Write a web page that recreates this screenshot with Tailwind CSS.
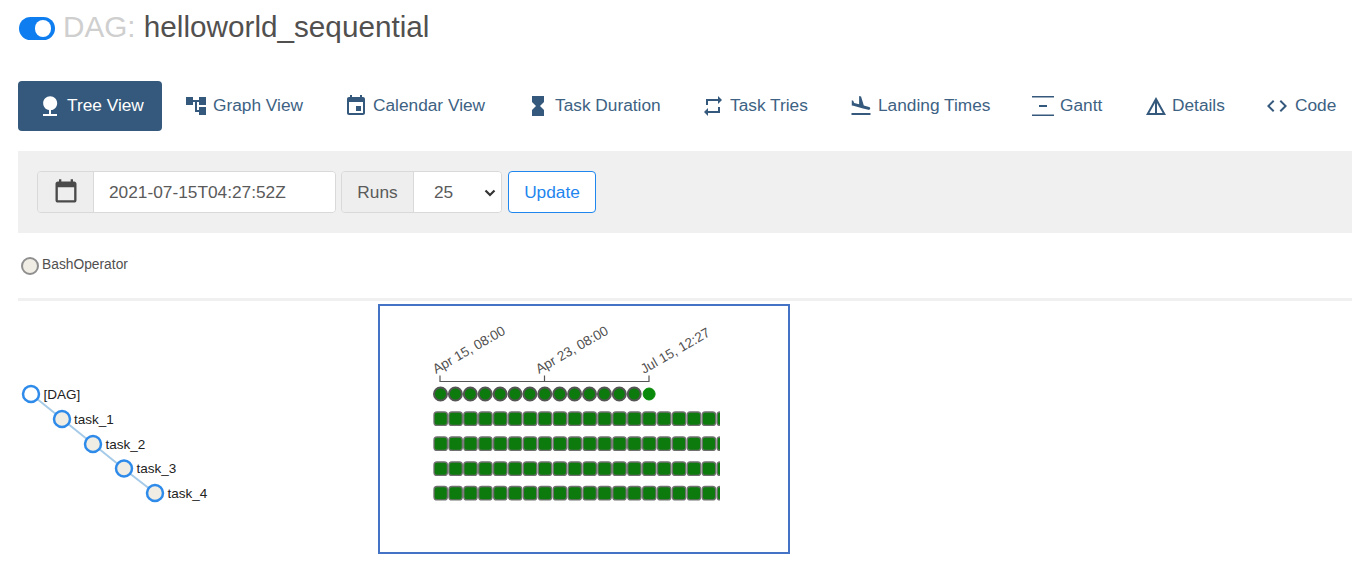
<!DOCTYPE html>
<html><head><meta charset="utf-8">
<script src="https://cdn.jsdelivr.net/npm/@tailwindcss/browser@4"></script>
</head>
<body class="bg-white overflow-hidden font-['Liberation_Sans',Arial,sans-serif] text-[#51504f]">
<div class="w-[1352px] h-[580px] pl-[18px] overflow-hidden">
  <header class="h-[81px] pt-[8px] flex items-start">
    <div class="mt-[9px] ml-[1px] w-[36px] h-[23px] rounded-full bg-[#0d7df0] flex items-center justify-end pr-[4px] shrink-0"><div class="w-[16px] h-[17px] rounded-full bg-white"></div></div>
    <h1 class="ml-[8px] text-[29.7px] leading-[38px] font-normal text-[#51504f] whitespace-nowrap"><span class="text-[#cfcfcf]">DAG:</span> helloworld_sequential</h1>
  </header>
  <nav class="flex h-[50px] items-stretch text-[#3d6283] text-[17.3px] whitespace-nowrap">
    <a class="flex items-center w-[144px] pl-[20px] gap-[5px] rounded-[4px] bg-[#34597c] text-white mr-[22px]">
      <svg class="w-[24px] h-[24px] fill-white" viewBox="0 0 24 24"><path d="M13 16.12c3.47-.4 6.17-3.36 6.17-6.95 0-3.87-3.13-7-7-7s-7 3.13-7 7c0 3.47 2.52 6.34 5.83 6.89V20H5v2h14v-2h-6v-3.88z"/></svg>Tree View</a>
    <a class="flex items-center w-[160px] gap-[5px]"><svg class="w-[24px] h-[24px] fill-[#34597c]" viewBox="0 0 24 24"><path d="M22 11V3h-7v3H9V3H2v8h7V8h2v10h4v3h7v-8h-7v3h-2V8h2v3z"/></svg>Graph View</a>
    <a class="flex items-center w-[182px] gap-[5px]"><svg class="w-[24px] h-[24px] fill-[#34597c]" viewBox="0 0 24 24"><path d="M17 12h-5v5h5v-5zM16 1v2H8V1H6v2H5c-1.11 0-1.99.9-1.99 2L3 19c0 1.1.89 2 2 2h14c1.1 0 2-.9 2-2V5c0-1.1-.9-2-2-2h-1V1h-2zm3 18H5V8h14v11z"/></svg>Calendar View</a>
    <a class="flex items-center w-[175px] gap-[5px]"><svg class="w-[24px] h-[24px] fill-[#34597c]" viewBox="0 0 24 24"><path d="M6 2v6h.01L6 8.01 10 12l-4 4 .01.01H6V22h12v-5.99h-.01L18 16l-4-4 4-3.99-.01-.01H18V2H6z"/></svg>Task Duration</a>
    <a class="flex items-center w-[148px] gap-[5px]"><svg class="w-[24px] h-[24px] fill-[#34597c]" viewBox="0 0 24 24"><path d="M7 7h10v3l4-4-4-4v3H5v6h2V7zm10 10H7v-3l-4 4 4 4v-3h12v-6h-2v4z"/></svg>Task Tries</a>
    <a class="flex items-center w-[182px] gap-[5px]"><svg class="w-[24px] h-[24px] fill-[#34597c]" viewBox="0 0 24 24"><path d="M2.5 19h19v2h-19zm7.18-5.73l4.35 1.16 5.31 1.42c.8.21 1.62-.26 1.84-1.06.21-.8-.26-1.62-1.06-1.84l-5.31-1.42-2.76-9.02L10.12 2v8.28L5.15 8.95l-.93-2.32-1.45-.39v5.17l1.6.43 5.31 1.43z"/></svg>Landing Times</a>
    <a class="flex items-center w-[113px] gap-[5px]"><svg class="w-[24px] h-[24px] fill-[#34597c]" viewBox="0 0 24 24"><path d="M1 22v-1.4h22V22H1zM1 3.4V2h22v1.4H1zM8 11h8v2H8z"/></svg>Gantt</a>
    <a class="flex items-center w-[121px] gap-[4px]"><svg class="w-[24px] h-[24px] fill-[#34597c]" viewBox="0 0 24 24"><path d="M12 3L2 21h20L12 3zm1 5.92L18.6 19H13V8.92zm-2 0V19H5.4L11 8.92z"/></svg>Details</a>
    <a class="flex items-center gap-[6px]"><svg class="w-[24px] h-[24px] fill-[#34597c]" viewBox="0 0 24 24"><path d="M9.4 16.6L4.8 12l4.6-4.6L8 6l-6 6 6 6 1.4-1.4zm5.2 0l4.6-4.6-4.6-4.6L16 6l6 6-6 6-1.4-1.4z"/></svg>Code</a>
  </nav>
  <form class="mt-[20px] h-[82px] bg-[#f0f0f0] pl-[19px] flex items-center text-[17.3px]">
    <div class="flex h-[42px] w-[299px] rounded-[4px] border border-[#d9d9d9] overflow-hidden">
      <span class="w-[56px] bg-[#eeeeee] border-r border-[#d9d9d9] flex items-center justify-center"><svg class="w-[28px] h-[28px] fill-[#4a4a4a]" viewBox="0 0 24 24"><path d="M19 3h-1V1h-2v2H8V1H6v2H5c-1.1 0-2 .9-2 2v14c0 1.1.9 2 2 2h14c1.1 0 2-.9 2-2V5c0-1.1-.9-2-2-2zm0 16H5V8h14v11z"/></svg></span>
      <span class="flex-1 bg-white flex items-center pl-[15px] pt-[2px] text-[#5a5a5a]">2021-07-15T04:27:52Z</span>
    </div>
    <div class="ml-[5px] flex h-[42px] w-[161px] rounded-[4px] border border-[#d9d9d9] overflow-hidden">
      <span class="w-[72px] bg-[#eeeeee] border-r border-[#d9d9d9] flex items-center justify-center pt-[2px] text-[#5a5a5a]">Runs</span>
      <span class="flex-1 bg-white flex items-center pl-[20px] pt-[2px] text-[#5a5a5a]">25<svg class="ml-[31px] w-[12px] h-[8px] stroke-[#333] fill-none" stroke-width="2.2" viewBox="0 0 12 8"><path d="M1.5 1.5 6 6l4.5-4.5"/></svg></span>
    </div>
    <button class="ml-[6px] h-[42px] w-[88px] rounded-[4px] border border-[#1f86ee] bg-white pt-[2px] text-[#1f86ee]">Update</button>
  </form>
  <div class="h-[68px] border-b-[3px] border-[#f0f0f0] flex items-center text-[13.8px] text-[#51504f]">
    <span class="ml-[3px] w-[18px] h-[18px] rounded-full bg-[#f0ede4] border-2 border-[#8f8f8f] box-border mr-[3px]"></span><span>BashOperator</span>
  </div>
  <div class="relative h-[280px] -ml-[18px]">
    <svg class="absolute left-0 top-0" width="1352" height="280" viewBox="0 301 1352 280" font-family="Liberation Sans, Arial, sans-serif">
      <defs><clipPath id="c"><rect x="428" y="405" width="292" height="100"/></clipPath></defs>
      <rect x="379" y="305" width="410" height="248" fill="#fff" stroke="#4472c4" stroke-width="2"/>
      <path d="M31 394 62 419 93 444 124 469 155 493" fill="none" stroke="#a6cbe8" stroke-width="2"/>
      <g stroke="#2f8bea" stroke-width="2.5" fill="#f0ede4">
        <circle cx="31" cy="394" r="8" fill="#fff"/><circle cx="62" cy="419" r="8"/><circle cx="93" cy="444" r="8"/><circle cx="124" cy="468.500" r="8"/><circle cx="155" cy="493" r="8"/>
      </g>
      <g font-size="13.5" fill="#222">
        <text x="43.5" y="399">[DAG]</text><text x="74" y="424">task_1</text><text x="105.500" y="449">task_2</text><text x="136.500" y="473">task_3</text><text x="167.500" y="498">task_4</text>
      </g>
      <path d="M440 375.500V381.500H649V375.500M544.500 375.500V381.500" fill="none" stroke="#555" stroke-width="1.2"/>
      <g font-size="13.500" fill="#51504f">
        <text transform="translate(436 374) rotate(-30)">Apr 15, 08:00</text>
        <text transform="translate(539 374) rotate(-30)">Apr 23, 08:00</text>
        <text transform="translate(644 374) rotate(-30)">Jul 15, 12:27</text>
      </g>
      <g fill="#0d7a0d" stroke="#555" stroke-width="2">
        <circle cx="440.500" cy="394" r="6.500"/><circle cx="455.400" cy="394" r="6.500"/><circle cx="470.300" cy="394" r="6.500"/><circle cx="485.200" cy="394" r="6.500"/><circle cx="500.100" cy="394" r="6.500"/><circle cx="515" cy="394" r="6.500"/><circle cx="529.900" cy="394" r="6.500"/><circle cx="544.800" cy="394" r="6.500"/><circle cx="559.700" cy="394" r="6.500"/><circle cx="574.600" cy="394" r="6.500"/><circle cx="589.500" cy="394" r="6.500"/><circle cx="604.400" cy="394" r="6.500"/><circle cx="619.300" cy="394" r="6.500"/><circle cx="634.200" cy="394" r="6.500"/>
        <circle cx="649.100" cy="394" r="6" fill="#0a8a0a" stroke="#0a8a0a" stroke-width="1"/>
      </g>
      <g clip-path="url(#c)" fill="#0d7a0d" stroke="#707070" stroke-width="1.300">
        <g id="r1">
          <rect x="434" y="412" width="13.400" height="13.400" rx="3"/><rect x="448.900" y="412" width="13.400" height="13.400" rx="3"/><rect x="463.800" y="412" width="13.400" height="13.400" rx="3"/><rect x="478.700" y="412" width="13.400" height="13.400" rx="3"/><rect x="493.600" y="412" width="13.400" height="13.400" rx="3"/><rect x="508.500" y="412" width="13.400" height="13.400" rx="3"/><rect x="523.400" y="412" width="13.400" height="13.400" rx="3"/><rect x="538.300" y="412" width="13.400" height="13.400" rx="3"/><rect x="553.200" y="412" width="13.400" height="13.400" rx="3"/><rect x="568.100" y="412" width="13.400" height="13.400" rx="3"/><rect x="583" y="412" width="13.400" height="13.400" rx="3"/><rect x="597.900" y="412" width="13.400" height="13.400" rx="3"/><rect x="612.800" y="412" width="13.400" height="13.400" rx="3"/><rect x="627.700" y="412" width="13.400" height="13.400" rx="3"/><rect x="642.600" y="412" width="13.400" height="13.400" rx="3"/><rect x="657.500" y="412" width="13.400" height="13.400" rx="3"/><rect x="672.400" y="412" width="13.400" height="13.400" rx="3"/><rect x="687.300" y="412" width="13.400" height="13.400" rx="3"/><rect x="702.200" y="412" width="13.400" height="13.400" rx="3"/><rect x="717.100" y="412" width="13.400" height="13.400" rx="3"/>
        </g>
        <use href="#r1" y="25"/><use href="#r1" y="50"/><use href="#r1" y="74.500"/>
      </g>
    </svg>
  </div>
</div>
</body></html>
